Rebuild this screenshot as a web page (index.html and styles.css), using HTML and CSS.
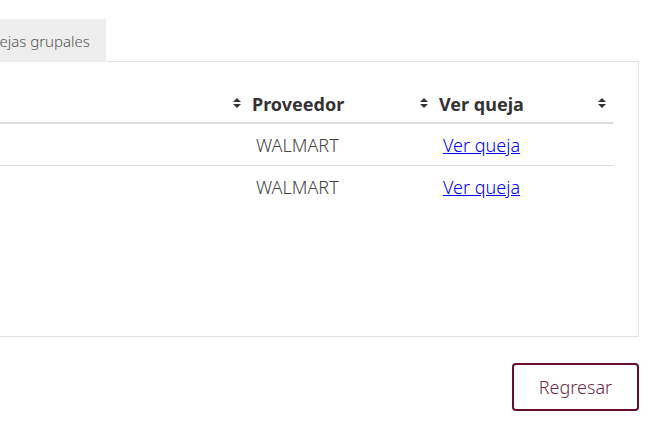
FILE: index.html
```html
<!DOCTYPE html>
<html lang="es">
<head>
<meta charset="utf-8">
<link rel="stylesheet" href="styles.css">
<title>Quejas grupales</title>
</head>
<body>
<div class="page">
  <div class="tabs">
    <div class="tab">Quejas grupales</div>
    <div class="tab-fill"></div>
  </div>
  <div class="panel">
    <table class="grid">
      <colgroup>
        <col>
        <col class="c-prov">
        <col class="c-ver">
      </colgroup>
      <thead>
        <tr>
          <th><span class="th-in"><span></span><svg class="sort" viewBox="0 0 8 11"><path d="M4 0L8 4H0Z M0 6H8L4 10Z"/></svg></span></th>
          <th><span class="th-in"><span>Proveedor</span><svg class="sort" viewBox="0 0 8 11"><path d="M4 0L8 4H0Z M0 6H8L4 10Z"/></svg></span></th>
          <th><span class="th-in"><span>Ver queja</span><svg class="sort" viewBox="0 0 8 11"><path d="M4 0L8 4H0Z M0 6H8L4 10Z"/></svg></span></th>
        </tr>
      </thead>
      <tbody>
        <tr>
          <td></td>
          <td>WALMART</td>
          <td><a href="#">Ver queja</a></td>
        </tr>
        <tr>
          <td></td>
          <td>WALMART</td>
          <td><a href="#">Ver queja</a></td>
        </tr>
      </tbody>
    </table>
  </div>
  <div class="actions">
    <button class="btn-back" type="button">Regresar</button>
  </div>
</div>
</body>
</html>
```

FILE: styles.css
```css
html, body {
  margin: 0;
  padding: 0;
  background: #fff;
  overflow: hidden;
}
body {
  font-family: "Noto Sans", "Open Sans", sans-serif;
  color: #555;
}
.page {
  margin-left: -37px;
  width: 676px;
  padding-top: 19px;
}
.tabs {
  display: flex;
}
.tab {
  background: #eeeeee;
  height: 43px;
  display: flex;
  align-items: center;
  padding: 0 16px;
  font-size: 15px;
  font-weight: 300;
  color: #555;
  box-sizing: border-box;
  margin-right: 1px;
}
.tab-fill {
  flex: 1;
  border-bottom: 1px solid #e3e3e3;
}
.panel {
  border: 1px solid #e3e3e3;
  border-top: none;
  padding: 23px 25px 0 25px;
  height: 251px;
}
.grid {
  width: 100%;
  border-collapse: collapse;
  table-layout: fixed;
}
.c-prov { width: 187px; }
.c-ver { width: 178px; }
.grid th {
  height: 37px;
  padding: 0 7px 0 4px;
  text-align: left;
  font-size: 18px;
  font-weight: 700;
  color: #333;
  border-bottom: 2px solid #dddddd;
  vertical-align: middle;
}
.th-in {
  display: flex;
  align-items: center;
  justify-content: space-between;
}
.sort {
  width: 8px;
  height: 11px;
  fill: #333;
  flex: none;
}
.grid td {
  height: 41px;
  padding: 0 8px;
  font-size: 18px;
  font-weight: 300;
  color: #444;
  vertical-align: middle;
}
.grid tbody tr:first-child td {
  border-bottom: 1px solid #dddddd;
}
.grid a {
  color: #0000ee;
  text-decoration: underline;
}
.actions {
  display: flex;
  justify-content: flex-end;
  margin-top: 26px;
}
.btn-back {
  width: 127px;
  height: 48px;
  background: #fff;
  border: 2px solid #66102f;
  border-radius: 4px;
  font-family: "Noto Sans", "Open Sans", sans-serif;
  font-size: 18px;
  font-weight: 300;
  color: #6a2a48;
  cursor: pointer;
}
```
